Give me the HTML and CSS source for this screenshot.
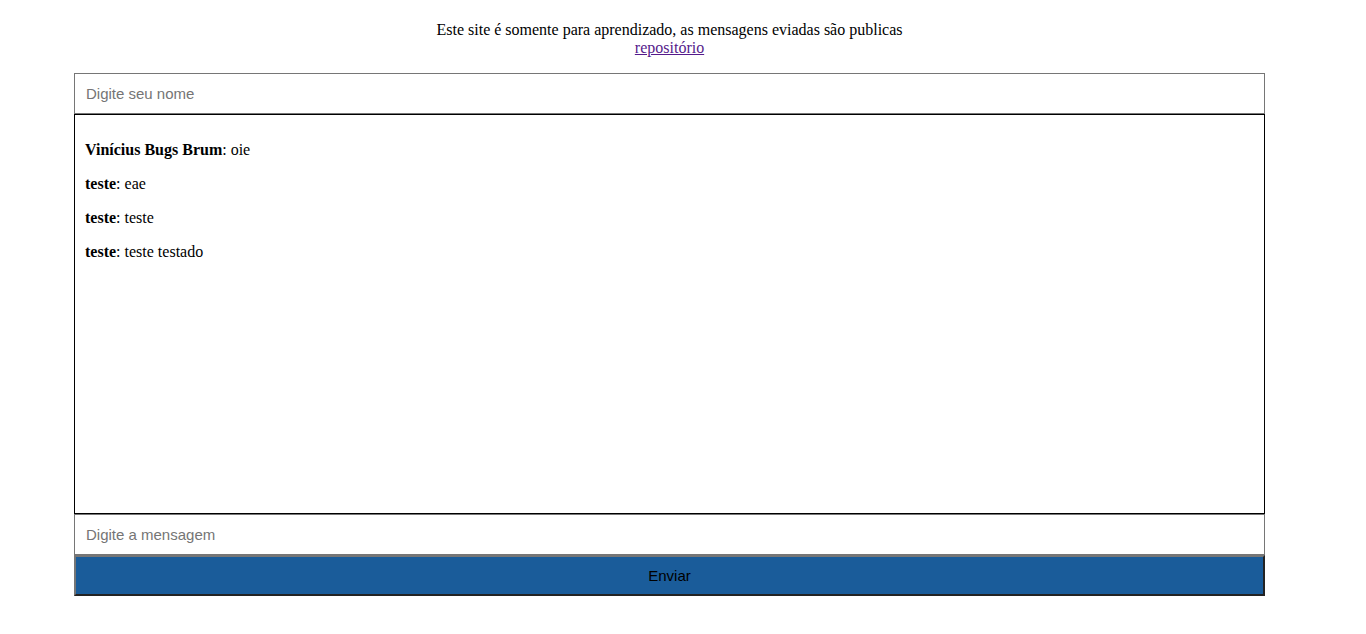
FILE: index.html
```html
<!DOCTYPE html>
<html lang="pt-BR">
<head>
<meta charset="utf-8">
<title>Chat</title>
<link rel="stylesheet" href="styles.css">
</head>
<body>
  <div class="page">
    <header class="notice">
      <div>Este site é somente para aprendizado, as mensagens eviadas são publicas</div>
      <a href="#" class="repo">repositório</a>
    </header>
    <main class="chat">
      <input class="field" type="text" placeholder="Digite seu nome">
      <div class="messages">
        <p class="msg"><b>Vinícius Bugs Brum</b>: oie</p>
        <p class="msg"><b>teste</b>: eae</p>
        <p class="msg"><b>teste</b>: teste</p>
        <p class="msg"><b>teste</b>: teste testado</p>
      </div>
      <input class="field" type="text" placeholder="Digite a mensagem">
      <button class="send" type="button">Enviar</button>
    </main>
  </div>
</body>
</html>
```
FILE: styles.css
```css
html, body {
  margin: 0;
  padding: 0;
  background: #fff;
}
body {
  font-family: "Liberation Serif", "Times New Roman", serif;
  font-size: 16px;
  color: #000;
}
.page {
  width: 1191px;
  margin-left: 74px;
  padding-top: 21px;
}
.notice {
  text-align: center;
  line-height: 18px;
  margin-bottom: 16px;
}
.repo {
  color: #551a8b;
}
.chat {
  display: flex;
  flex-direction: column;
}
.field {
  box-sizing: border-box;
  height: 41px;
  width: 100%;
  margin: 0;
  border: 1px solid #767676;
  padding: 0 11px;
  font-family: "Liberation Sans", Arial, sans-serif;
  font-size: 15px;
  color: #000;
  outline: none;
}
.field::placeholder {
  color: #757575;
}
.messages {
  box-sizing: border-box;
  height: 400px;
  border: 1px solid #000;
  padding: 10px 10px;
  overflow: auto;
}
.msg {
  margin: 16px 0;
  line-height: 18px;
}
.send {
  box-sizing: border-box;
  height: 41px;
  width: 100%;
  margin: 0;
  background: #1a5c9a;
  border-style: solid;
  border-width: 2px;
  border-color: #767676 #232323 #232323 #767676;
  font-family: "Liberation Sans", Arial, sans-serif;
  font-size: 15px;
  color: #000;
  cursor: pointer;
}
```
